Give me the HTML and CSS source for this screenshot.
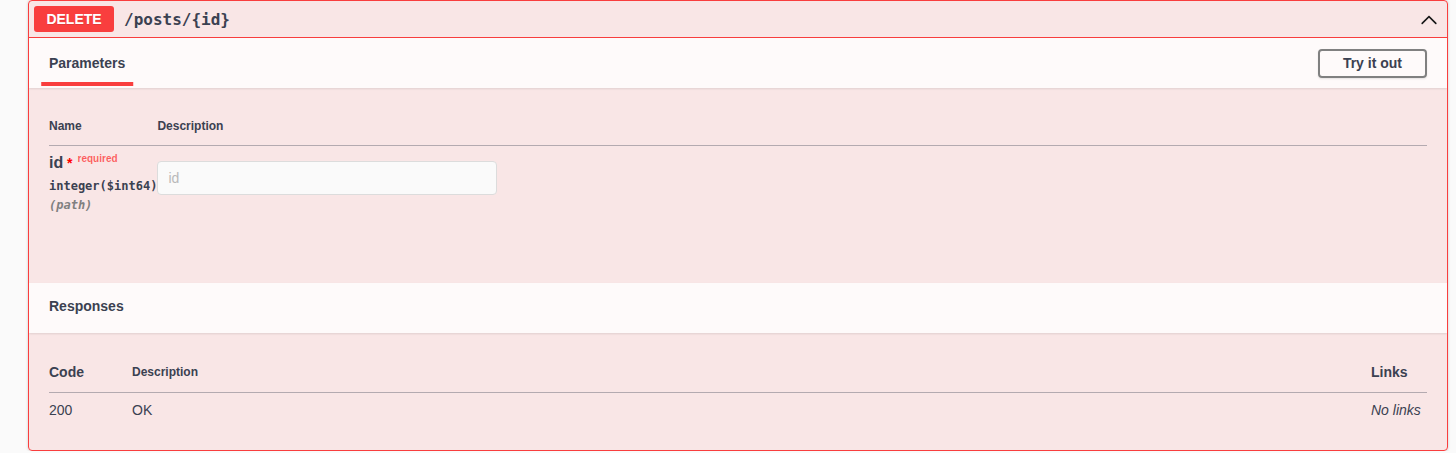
FILE: index.html
```html
<!DOCTYPE html>
<html lang="en">
<head>
<meta charset="utf-8">
<title>DELETE /posts/{id}</title>
<link rel="stylesheet" href="styles.css">
</head>
<body>
<div class="page">
  <div class="opblock">
    <div class="summary">
      <span class="method">DELETE</span>
      <span class="path">/posts/{id}</span>
      <span class="spacer"></span>
      <svg class="arrow" width="20" height="20" viewBox="0 0 20 20" aria-hidden="true"><path d="M17.418 14.908c-.32.32-.837.32-1.157 0L10 8.646l-6.26 6.262c-.32.32-.837.32-1.157 0-.32-.32-.32-.838 0-1.158l6.84-6.84c.32-.32.837-.32 1.157 0l6.84 6.84c.32.32.32.838 0 1.158z"/></svg>
    </div>

    <div class="section-header">
      <div class="tab-header">
        <div class="tab-item"><h4 class="tab-title"><span class="tab-label">Parameters</span></h4></div>
      </div>
      <button class="try-out" type="button">Try it out</button>
    </div>

    <div class="params-body">
      <table class="params">
        <thead>
          <tr><th class="col-name">Name</th><th class="col-desc">Description</th></tr>
        </thead>
        <tbody>
          <tr>
            <td class="col-name">
              <div class="param-name">id<span class="star">&nbsp;*</span><span class="req">required</span></div>
              <div class="param-type">integer($int64)</div>
              <div class="param-in">(path)</div>
            </td>
            <td class="col-desc"><input class="param-input" type="text" placeholder="id" disabled></td>
          </tr>
        </tbody>
      </table>
    </div>

    <div class="section-header">
      <h4 class="section-title">Responses</h4>
    </div>

    <div class="responses-body">
      <table class="responses">
        <thead>
          <tr>
            <th class="col-status">Code</th>
            <th class="col-rdesc">Description</th>
            <th class="col-links">Links</th>
          </tr>
        </thead>
        <tbody>
          <tr>
            <td class="col-status">200</td>
            <td class="col-rdesc"><span class="md">OK</span></td>
            <td class="col-links"><i class="no-links">No links</i></td>
          </tr>
        </tbody>
      </table>
    </div>
  </div>
</div>
</body>
</html>
```

FILE: styles.css
```css
* { box-sizing: border-box; }

html, body {
  margin: 0;
  padding: 0;
  background: #fafafa;
  font-family: "Liberation Sans", Arial, sans-serif;
  color: #3b4151;
}

.page {
  padding-left: 28px;
  width: 1448px;
}

.opblock {
  width: 1420px;
  border: 1px solid #f93e3e;
  border-radius: 4px;
  background: rgba(249, 62, 62, 0.1);
  box-shadow: 0 0 3px rgba(0, 0, 0, 0.19);
  overflow: hidden;
}

/* summary */
.summary {
  display: flex;
  align-items: center;
  padding: 5px;
  border-bottom: 1px solid #f93e3e;
}

.method {
  min-width: 80px;
  padding: 6px 0;
  line-height: 14px;
  font-size: 14px;
  font-weight: 700;
  text-align: center;
  color: #fff;
  background: #f93e3e;
  border-radius: 3px;
  text-shadow: 0 1px 0 rgba(0, 0, 0, 0.1);
}

.path {
  padding: 0 10px;
  font-family: "DejaVu Sans Mono", "Liberation Mono", monospace;
  font-size: 16px;
  font-weight: 700;
  color: #3b4151;
}

.spacer { flex: 1; }

.arrow {
  display: block;
  margin-right: 3px;
  fill: #1a1a1a;
}

/* section headers */
.section-header {
  display: flex;
  align-items: center;
  min-height: 50px;
  padding: 8px 20px;
  background: rgba(255, 255, 255, 0.8);
  box-shadow: 0 1px 2px rgba(0, 0, 0, 0.1);
}

.tab-header {
  display: flex;
  flex: 1;
}

.tab-title {
  margin: 0;
  font-size: 14px;
  font-weight: 700;
  line-height: 15px;
  color: #3b4151;
}

.tab-label {
  position: relative;
  display: inline-block;
}

.tab-label::after {
  content: "";
  position: absolute;
  left: 50%;
  bottom: -15px;
  width: 120%;
  height: 4px;
  transform: translateX(-50%);
  background: #f93e3e;
}

.section-title {
  margin: 0 0 3px;
  font-size: 14px;
  font-weight: 700;
  line-height: 15px;
  color: #3b4151;
}

.try-out {
  padding: 5px 23px;
  font-family: "Liberation Sans", Arial, sans-serif;
  font-size: 14px;
  font-weight: 700;
  line-height: 15px;
  color: #3b4151;
  background: transparent;
  border: 2px solid #808080;
  border-radius: 4px;
  box-shadow: 0 1px 2px rgba(0, 0, 0, 0.1);
}

/* parameters */
.params-body {
  padding: 20px;
  min-height: 195px;
}

table {
  width: 100%;
  border-collapse: collapse;
}

th {
  padding: 12px 0;
  text-align: left;
  font-size: 12px;
  font-weight: 700;
  line-height: 13px;
  color: #3b4151;
  border-bottom: 1px solid rgba(59, 65, 81, 0.2);
}

td {
  vertical-align: top;
  text-align: left;
}

.params td { padding: 10px 0 0; }

.params td.col-name { padding-top: 8px; }

.params .col-desc { width: 99%; }

.param-name {
  font-size: 16px;
  font-weight: 700;
  line-height: 18px;
  color: #3b4151;
  white-space: nowrap;
}

.star {
  color: #ff0000;
  font-size: 14px;
  line-height: 0;
}

.req {
  padding: 5px;
  font-size: 10px;
  font-weight: 700;
  line-height: 0;
  color: rgba(255, 0, 0, 0.6);
  vertical-align: 6px;
}

.param-type {
  padding: 7px 0 5px;
  font-family: "DejaVu Sans Mono", "Liberation Mono", monospace;
  font-size: 12px;
  font-weight: 700;
  line-height: 14px;
  color: #3b4151;
  white-space: nowrap;
}

.param-in {
  font-family: "DejaVu Sans Mono", "Liberation Mono", monospace;
  font-size: 12px;
  font-style: italic;
  font-weight: 700;
  line-height: 14px;
  color: #808080;
}

.param-input {
  display: block;
  width: 340px;
  margin: 5px 0;
  padding: 8px 10px;
  font-family: "Liberation Sans", Arial, sans-serif;
  font-size: 14px;
  line-height: 16px;
  color: #3b4151;
  background: #fafafa;
  border: 1px solid #dcdcdc;
  border-radius: 4px;
}

.param-input::placeholder { color: #b9b9b9; }

/* responses */
.responses-body { padding: 20px; }

.responses th {
  padding: 11px 0 12px;
  line-height: 16px;
}

.responses th.col-status,
.responses th.col-links {
  font-size: 14px;
}

.responses td {
  padding: 9px 0 12px;
  font-size: 14px;
  line-height: 16px;
  color: #3b4151;
}

.responses .col-status { width: 83px; }

.responses .col-links {
  width: 56px;
  white-space: nowrap;
}

.responses .md { font-size: 14px; }

.no-links { font-style: italic; }
```
